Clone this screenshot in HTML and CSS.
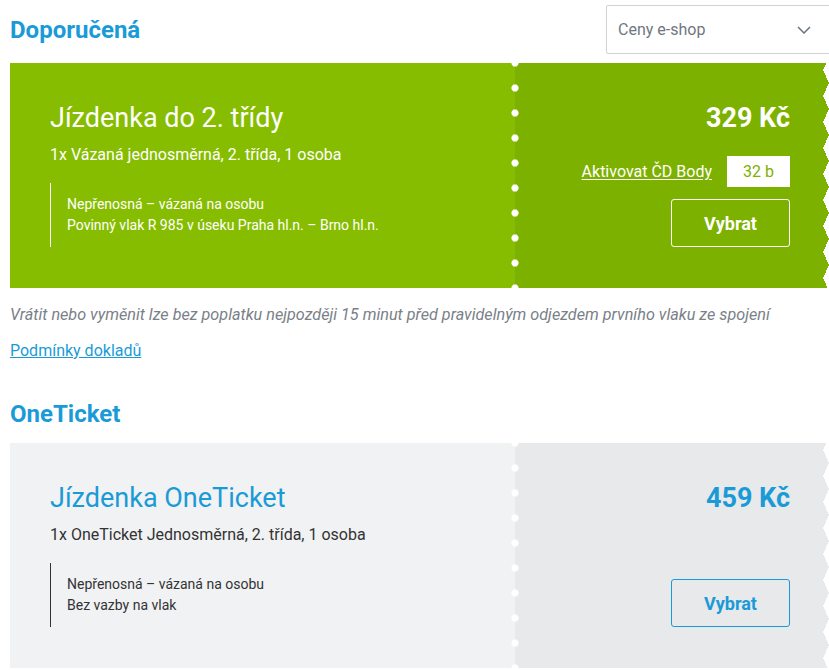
FILE: index.html
```html
<!DOCTYPE html>
<html lang="cs">
<head>
<meta charset="utf-8">
<title>Jízdenky</title>
<link rel="stylesheet" href="styles.css">
</head>
<body>
<div class="page">
  <div class="head-row">
    <h2 class="section-title">Doporučená</h2>
    <div class="select">
      <span class="select-text">Ceny e-shop</span>
      <svg class="chev" width="14" height="8" viewBox="0 0 14 8"><path d="M1 1l6 6 6-6" fill="none" stroke="#6b7280" stroke-width="1.5"/></svg>
    </div>
  </div>

  <div class="ticket ticket-green">
    <div class="t-main">
      <div class="t-title">Jízdenka do 2. třídy</div>
      <div class="t-sub">1x Vázaná jednosměrná, 2. třída, 1 osoba</div>
      <div class="t-notes">
        <div>Nepřenosná – vázaná na osobu</div>
        <div>Povinný vlak R 985 v úseku Praha hl.n. – Brno hl.n.</div>
      </div>
    </div>
    <div class="t-side">
      <div class="t-price">329 Kč</div>
      <div class="t-actions">
        <div class="points">
          <a class="points-link" href="#">Aktivovat ČD Body</a>
          <span class="points-box">32 b</span>
        </div>
        <button class="btn">Vybrat</button>
      </div>
    </div>
  </div>

  <p class="note">Vrátit nebo vyměnit lze bez poplatku nejpozději 15 minut před pravidelným odjezdem prvního vlaku ze spojení</p>
  <a class="terms" href="#">Podmínky dokladů</a>

  <h2 class="section-title second">OneTicket</h2>

  <div class="ticket ticket-grey">
    <div class="t-main">
      <div class="t-title">Jízdenka OneTicket</div>
      <div class="t-sub">1x OneTicket Jednosměrná, 2. třída, 1 osoba</div>
      <div class="t-notes">
        <div>Nepřenosná – vázaná na osobu</div>
        <div>Bez vazby na vlak</div>
      </div>
    </div>
    <div class="t-side">
      <div class="t-price">459 Kč</div>
      <div class="t-actions">
        <button class="btn">Vybrat</button>
      </div>
    </div>
  </div>
</div>
</body>
</html>
```

FILE: styles.css
```css
html, body {
  margin: 0;
  padding: 0;
  overflow: hidden;
  background: #fff;
}
body {
  font-family: Roboto, "Liberation Sans", Arial, sans-serif;
  color: #333;
}
.page {
  width: 819px;
  padding-left: 10px;
}
.head-row {
  display: flex;
  align-items: center;
  justify-content: space-between;
  padding-top: 5px;
  margin-bottom: 9px;
}
.section-title {
  margin: 0;
  font-size: 24px;
  font-weight: 700;
  color: #1a9bd7;
  line-height: 28px;
}
.select {
  box-sizing: border-box;
  width: 227px;
  height: 49px;
  border: 1px solid #cfd2d6;
  border-radius: 2px;
  margin-right: -4px;
  display: flex;
  align-items: center;
  justify-content: space-between;
  padding: 0 18px 0 11px;
}
.select-text {
  font-size: 16px;
  color: #6f7782;
}
.chev {
  margin-right: 3px;
}
.ticket {
  display: flex;
  position: relative;
}
.ticket::after {
  content: "";
  position: absolute;
  top: 0;
  right: 0;
  bottom: 0;
  width: 6px;
  background: conic-gradient(at 0 50%, transparent 24.8deg, #fff 0 155.2deg, transparent 0) 0 -6px / 6px 26px repeat-y;
}
.t-main {
  width: 505px;
  box-sizing: border-box;
  padding: 40px 20px 41px 40px;
}
.t-side {
  flex: 1;
  position: relative;
  display: flex;
  flex-direction: column;
  align-items: flex-end;
  justify-content: space-between;
  padding: 40px 39px 41px 20px;
}
.t-side::before {
  content: "";
  position: absolute;
  left: -4px;
  top: 0;
  bottom: 0;
  width: 8px;
  background: radial-gradient(circle at 4px 12.5px, #fff 3.3px, transparent 3.9px) 0 -12.5px / 8px 25px repeat-y;
}
.t-title {
  font-size: 27px;
  line-height: 30px;
  font-weight: 400;
}
.t-sub {
  font-size: 16px;
  line-height: 24px;
  margin-top: 10px;
}
.t-notes {
  margin-top: 16px;
  border-left: 1px solid;
  padding: 11px 0 11px 16px;
  font-size: 14px;
  line-height: 21px;
}
.t-price {
  font-size: 27px;
  line-height: 30px;
  font-weight: 700;
}
.t-actions {
  display: flex;
  flex-direction: column;
  align-items: flex-end;
  gap: 12px;
}
.points {
  display: flex;
  align-items: center;
  gap: 15px;
}
.points-link {
  font-size: 16px;
  color: #fff;
  text-decoration: underline;
  text-underline-offset: 2px;
}
.points-box {
  width: 63px;
  height: 31px;
  background: #fff;
  color: #7db100;
  font-size: 16px;
  display: flex;
  align-items: center;
  justify-content: center;
}
.btn {
  width: 119px;
  height: 48px;
  border-radius: 3px;
  background: transparent;
  font-family: inherit;
  font-size: 18px;
  font-weight: 700;
  cursor: pointer;
}
.ticket-green .t-main {
  background: #86bd00;
  color: #fff;
}
.ticket-green .t-side {
  background: #7db100;
  color: #fff;
}
.ticket-green .t-notes {
  border-color: #fff;
}
.ticket-green .btn {
  border: 1px solid #fff;
  color: #fff;
}
.ticket-grey .t-main {
  background: #f1f2f4;
  color: #333;
}
.ticket-grey .t-title {
  color: #1a9bd7;
}
.ticket-grey .t-side {
  background: #e8e9eb;
}
.ticket-grey .t-price {
  color: #1a9bd7;
}
.ticket-grey .t-notes {
  border-color: #333;
}
.ticket-grey .btn {
  border: 1px solid #1a9bd7;
  color: #1a9bd7;
}
.note {
  margin: 17px 0 0;
  font-size: 16.2px;
  line-height: 20px;
  font-style: italic;
  color: #7a7f88;
}
.terms {
  display: inline-block;
  margin-top: 16px;
  font-size: 16px;
  line-height: 20px;
  color: #1a9bd7;
  text-decoration: underline;
}
.second {
  margin-top: 39px;
  margin-bottom: 15px;
}
```
